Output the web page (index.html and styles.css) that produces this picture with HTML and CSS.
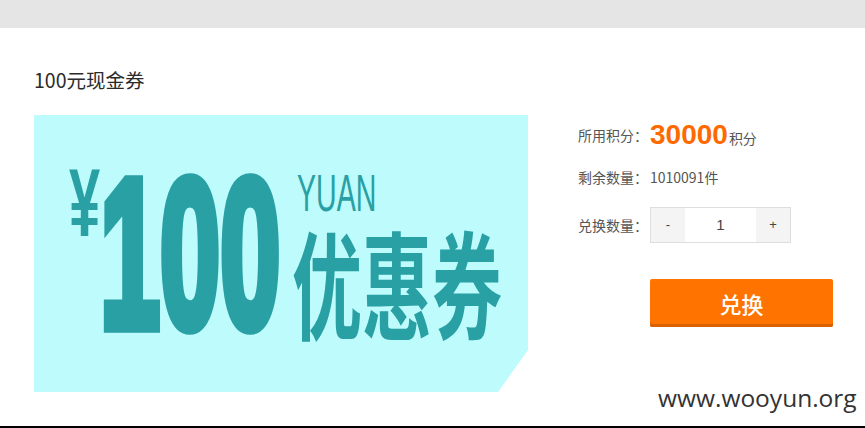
FILE: index.html
```html
<!DOCTYPE html>
<html lang="zh-CN">
<head>
<meta charset="utf-8">
<title>100元现金券</title>
<link rel="stylesheet" href="styles.css">
</head>
<body>
<div class="topbar"></div>
<div class="page">
  <h1 class="title">100元现金券</h1>
  <div class="main">
    <div class="coupon">
      <div class="yen"><span>¥</span></div>
      <div class="num"><span>100</span></div>
      <div class="words">
        <div class="yuan"><span>YUAN</span></div>
        <div class="yhq"><span>优惠券</span></div>
      </div>
    </div>
    <div class="info">
      <div class="row row-points">
        <span class="label">所用积分：</span>
        <span class="points"><b>30000</b><small>积分</small></span>
      </div>
      <div class="row row-stock">
        <span class="label">剩余数量：</span>
        <span class="stock">1010091件</span>
      </div>
      <div class="row row-qty">
        <span class="label">兑换数量：</span>
        <div class="stepper">
          <span class="step">-</span>
          <span class="qty">1</span>
          <span class="step">+</span>
        </div>
      </div>
      <button class="exchange">兑换</button>
    </div>
  </div>
</div>
<div class="bottomline"></div>
<div class="watermark">www.wooyun.org</div>
</body>
</html>
```
FILE: styles.css
```css
html, body {
  margin: 0;
  padding: 0;
}
body {
  width: 865px;
  height: 428px;
  overflow: hidden;
  display: flex;
  flex-direction: column;
  background: #fff;
  font-family: "Noto Sans CJK SC", "Noto Sans", sans-serif;
  position: relative;
}
.topbar {
  height: 28px;
  background: #e5e5e5;
  flex: none;
}
.page {
  flex: 1;
  padding: 0 34px;
}
.title {
  margin: 40px 0 0;
  height: 24px;
  line-height: 24px;
  font-size: 19.5px;
  font-weight: normal;
  color: #2b2b2b;
}
.main {
  display: flex;
  margin-top: 23px;
}
.coupon {
  width: 494px;
  height: 277px;
  background: #bdfbfc;
  clip-path: polygon(0 0, 100% 0, 100% 235px, 464px 100%, 0 100%);
  display: flex;
  align-items: flex-start;
  color: #29a0a3;
  flex: none;
}
.yen {
  margin: 40px 0 0 35px;
  width: 31px;
  height: 70px;
  font-family: "Liberation Sans", Arial, sans-serif;
  font-weight: bold;
  font-size: 56px;
  line-height: 56px;
}
.yen span, .num span, .yuan span, .yhq span {
  display: inline-block;
  transform-origin: left top;
  white-space: nowrap;
}
.yen span {
  transform: scale(1, 1.72);
}
.num {
  margin-top: 32px;
  width: 183px;
  height: 190px;
  font-family: "Liberation Sans", Arial, sans-serif;
  font-weight: bold;
  font-size: 100px;
  line-height: 100px;
}
.num span {
  -webkit-text-stroke: 5.5px #29a0a3;
  transform: scale(1.08, 2.12);
}
.words {
  margin: 53px 0 0 9px;
}
.yuan {
  height: 54px;
  padding-left: 5px;
  font-family: "Liberation Sans", Arial, sans-serif;
  font-size: 28px;
  line-height: 28px;
}
.yuan span {
  transform: scale(1.02, 1.85);
}
.yhq {
  font-family: "Noto Sans CJK SC", sans-serif;
  font-weight: bold;
  font-size: 70px;
  line-height: 70px;
  height: 117px;
}
.yhq span {
  transform: scale(1, 1.67);
}
.info {
  margin: 5px 0 0 50px;
  color: #555;
  font-size: 14px;
}
.row {
  display: flex;
  align-items: center;
}
.label {
  width: 72px;
  flex: none;
}
.row-points {
  height: 30px;
}
.points b {
  font-family: "Liberation Sans", Arial, sans-serif;
  font-weight: bold;
  font-size: 28px;
  color: #ff6a00;
  line-height: 30px;
}
.points small {
  font-size: 14px;
  margin-left: 1px;
  color: #555;
}
.row-stock {
  margin-top: 17px;
  height: 20px;
  line-height: 20px;
}
.row-qty {
  margin-top: 20px;
  height: 36px;
}
.stepper {
  display: flex;
  height: 34px;
  border: 1px solid #dedede;
}
.step {
  width: 34px;
  background: #f4f4f4;
  text-align: center;
  line-height: 34px;
  font-family: "Liberation Sans", Arial, sans-serif;
  font-size: 13px;
  color: #444;
}
.qty {
  width: 71px;
  background: #fff;
  text-align: center;
  line-height: 34px;
  font-family: "Liberation Sans", Arial, sans-serif;
  font-size: 15px;
  color: #444;
}
.exchange {
  display: block;
  margin: 36px 0 0 72px;
  width: 183px;
  height: 48px;
  padding: 0;
  border: 0;
  border-radius: 2px;
  background: #ff7300;
  box-shadow: inset 0 -3px 0 #d96200;
  color: #fff;
  font-family: "Noto Sans CJK SC", sans-serif;
  font-size: 22px;
  font-weight: 500;
  line-height: 46px;
  text-align: center;
}
.bottomline {
  height: 2px;
  background: #000;
  flex: none;
}
.watermark {
  position: absolute;
  left: 658px;
  top: 386px;
  font-family: "Open Sans", sans-serif;
  font-size: 24.5px;
  line-height: 24px;
  color: #333;
}
```
